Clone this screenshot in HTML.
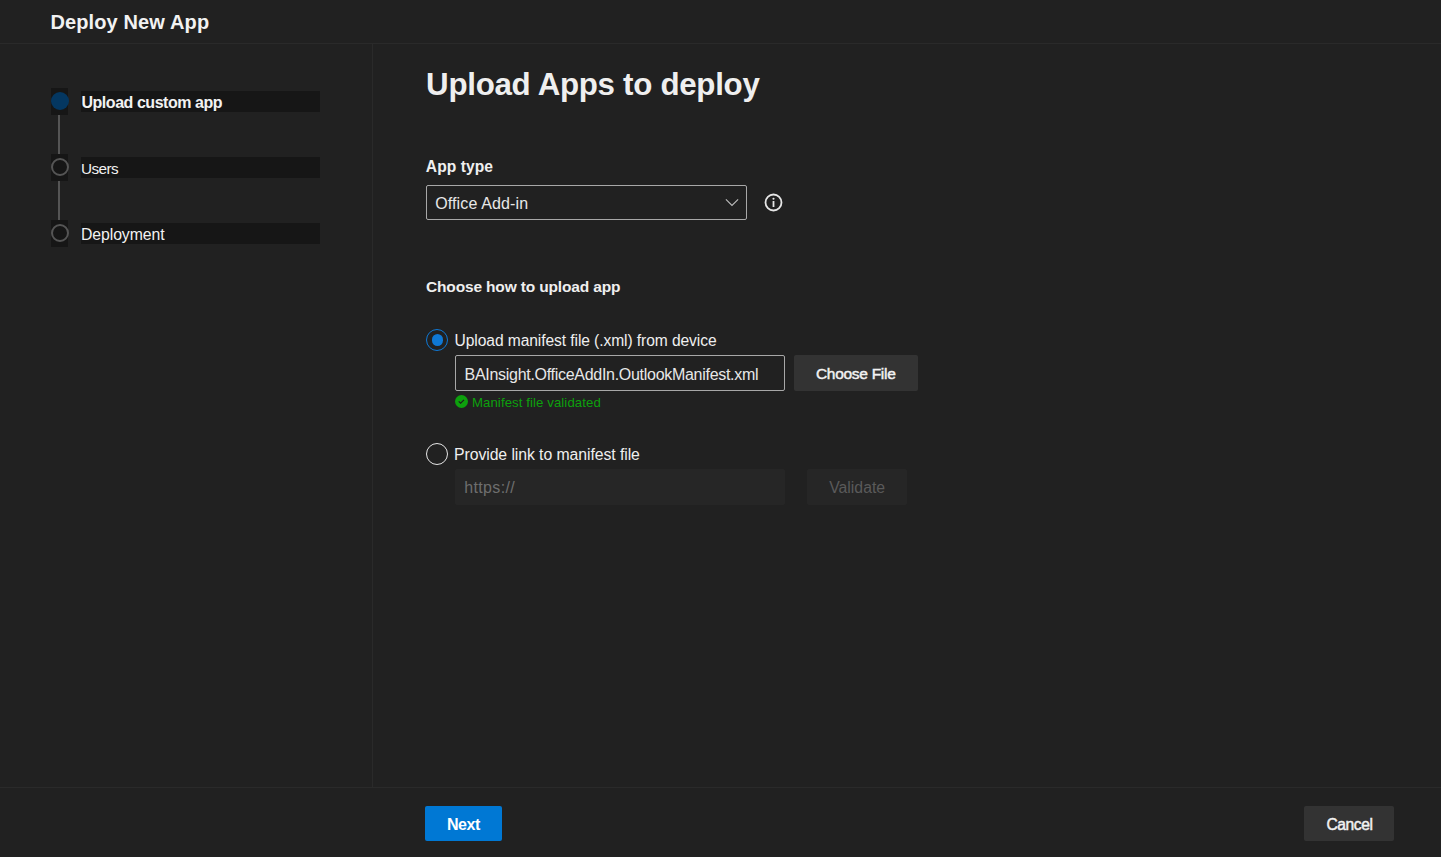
<!DOCTYPE html>
<html><head><meta charset="utf-8"><style>
html,body{margin:0;padding:0;width:1441px;height:857px;overflow:hidden;background:#212121;font-family:"Liberation Sans",sans-serif}
.a{position:absolute}
.t{position:absolute;white-space:nowrap;line-height:30px}
</style></head><body>
<div class="a" style="left:0;top:43px;width:1441px;height:1px;background:#2a2a2a"></div>
<div class="a" style="left:372px;top:44px;width:1px;height:743px;background:#2a2a2a"></div>
<div class="a" style="left:0;top:787px;width:1441px;height:1px;background:#2a2a2a"></div>

<div class="a" style="left:51px;top:88px;width:17px;height:27px;background:#161616"></div>
<div class="a" style="left:51px;top:92px;width:18px;height:18px;border-radius:50%;background:#043761"></div>
<div class="a" style="left:58px;top:115px;width:2px;height:39px;background:#555"></div>
<div class="a" style="left:51px;top:154px;width:17px;height:27px;background:#161616"></div>
<div class="a" style="left:51px;top:158px;width:18px;height:18px;border-radius:50%;box-sizing:border-box;border:2px solid #555;"></div>
<div class="a" style="left:58px;top:181px;width:2px;height:39px;background:#555"></div>
<div class="a" style="left:51px;top:220px;width:17px;height:27px;background:#161616"></div>
<div class="a" style="left:51px;top:224px;width:18px;height:18px;border-radius:50%;box-sizing:border-box;border:2px solid #555;"></div>
<div class="a" style="left:81px;top:91px;width:239px;height:21px;background:#161616"></div>
<div class="a" style="left:81px;top:157px;width:239px;height:21px;background:#161616"></div>
<div class="a" style="left:81px;top:223px;width:239px;height:21px;background:#161616"></div>

<div class="a" style="left:426px;top:185px;width:321px;height:35px;box-sizing:border-box;border:1px solid #a8a8a8;border-radius:2px"></div>
<svg class="a" style="left:720px;top:192px" width="24" height="20" viewBox="0 0 24 20"><path d="M5.9 7.3 L12 13.4 L18.1 7.3" fill="none" stroke="#bdbdbd" stroke-width="1.1"/></svg>
<svg class="a" style="left:763px;top:192px" width="21" height="21" viewBox="0 0 21 21"><circle cx="10.5" cy="10.5" r="8" fill="none" stroke="#e6e6e6" stroke-width="1.8"/><rect x="9.6" y="9" width="1.8" height="6" fill="#e6e6e6"/><circle cx="10.5" cy="6.8" r="1.05" fill="#e6e6e6"/></svg>

<div class="a" style="left:426px;top:329px;width:22px;height:22px;box-sizing:border-box;border-radius:50%;border:1px solid #0f78d4"></div>
<div class="a" style="left:431.5px;top:334px;width:11.5px;height:11.5px;border-radius:50%;background:#0f78d4"></div>
<div class="a" style="left:455px;top:355px;width:330px;height:36px;box-sizing:border-box;border:1px solid #a8a8a8;border-radius:2px"></div>
<div class="a" style="left:794px;top:355px;width:124px;height:36px;background:#333;border-radius:2px"></div>
<svg class="a" style="left:455px;top:395px" width="13" height="13" viewBox="0 0 13 13"><circle cx="6.5" cy="6.5" r="6.5" fill="#0da00d"/><path d="M3.7 6.3 L5.6 8.1 L9 4.8" fill="none" stroke="#1c1c1c" stroke-width="1.15"/></svg>

<div class="a" style="left:426px;top:443px;width:22px;height:22px;box-sizing:border-box;border-radius:50%;border:1px solid #e6e6e6"></div>
<div class="a" style="left:455px;top:469px;width:330px;height:36px;background:#262626;border-radius:2px"></div>
<div class="a" style="left:807px;top:469px;width:100px;height:36px;background:#262626;border-radius:2px"></div>

<div class="a" style="left:425px;top:806px;width:77px;height:35px;background:#0078d4;border-radius:2px"></div>
<div class="a" style="left:1304px;top:806px;width:90px;height:35px;background:#333;border-radius:2px"></div>
<div class="t" style="left:50.40px;top:6.97px;font-size:20px;font-weight:bold;letter-spacing:0.131px;color:#f2f2f2">Deploy New App</div>
<div class="t" style="left:81.44px;top:88.46px;font-size:16px;font-weight:bold;letter-spacing:-0.455px;color:#f2f2f2">Upload custom app</div>
<div class="t" style="left:80.98px;top:154.10px;font-size:15.3px;font-weight:normal;letter-spacing:-0.538px;color:#f2f2f2">Users</div>
<div class="t" style="left:80.94px;top:219.93px;font-size:15.8px;font-weight:normal;letter-spacing:-0.072px;color:#f2f2f2">Deployment</div>
<div class="t" style="left:426.12px;top:69.75px;font-size:31.3px;font-weight:bold;letter-spacing:-0.296px;color:#efefef">Upload Apps to deploy</div>
<div class="t" style="left:425.83px;top:151.59px;font-size:15.6px;font-weight:bold;letter-spacing:0.061px;color:#efefef">App type</div>
<div class="t" style="left:435.20px;top:189.46px;font-size:16px;font-weight:normal;letter-spacing:0.130px;color:#e8e8e8">Office Add-in</div>
<div class="t" style="left:425.98px;top:271.63px;font-size:15.5px;font-weight:bold;letter-spacing:-0.156px;color:#efefef">Choose how to upload app</div>
<div class="t" style="left:454.55px;top:325.59px;font-size:15.6px;font-weight:normal;letter-spacing:-0.082px;color:#efefef">Upload manifest file (.xml) from device</div>
<div class="t" style="left:464.52px;top:360.46px;font-size:16px;font-weight:normal;letter-spacing:-0.289px;color:#e8e8e8">BAInsight.OfficeAddIn.OutlookManifest.xml</div>
<div class="t" style="left:815.95px;top:358.63px;font-size:15.5px;font-weight:normal;letter-spacing:-0.287px;color:#f2f2f2;-webkit-text-stroke:0.45px #f2f2f2">Choose File</div>
<div class="t" style="left:471.94px;top:388.43px;font-size:13.2px;font-weight:normal;letter-spacing:0.091px;color:#0da00d">Manifest file validated</div>
<div class="t" style="left:454.04px;top:439.53px;font-size:15.8px;font-weight:normal;letter-spacing:-0.074px;color:#efefef">Provide link to manifest file</div>
<div class="t" style="left:464.18px;top:472.76px;font-size:16px;font-weight:normal;letter-spacing:0.360px;color:#6e6e6e">https://</div>
<div class="t" style="left:829.14px;top:472.53px;font-size:15.8px;font-weight:normal;letter-spacing:0.017px;color:#5a5a5a">Validate</div>
<div class="t" style="left:446.88px;top:810.46px;font-size:16px;font-weight:bold;letter-spacing:-0.380px;color:#ffffff">Next</div>
<div class="t" style="left:1326.44px;top:809.59px;font-size:15.6px;font-weight:normal;letter-spacing:-0.410px;color:#f2f2f2;-webkit-text-stroke:0.45px #f2f2f2">Cancel</div>
</body></html>
